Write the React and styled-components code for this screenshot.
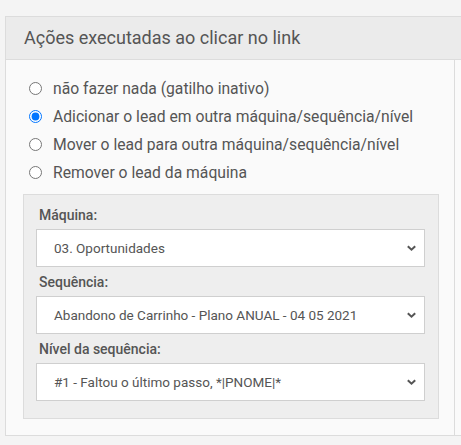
import React from "react";
import styled, { createGlobalStyle } from "styled-components";

const GlobalStyle = createGlobalStyle`
  html, body {
    margin: 0;
    padding: 0;
    background: #f4f4f4;
    overflow: hidden;
  }
  body {
    font-family: Roboto, "Liberation Sans", sans-serif;
    color: #555;
  }
`;

const Page = styled.div`
  padding: 16px 0 0 5px;
  width: 470px;
`;

const Panel = styled.section`
  border: 1px solid #dcdcdc;
  border-right: none;
  background: #fafafa;
`;

const PanelHeader = styled.h2`
  margin: 0;
  height: 42px;
  line-height: 42px;
  padding-left: 18px;
  background: #ebebeb;
  border-bottom: 1px solid #dcdcdc;
  font-size: 18px;
  font-weight: 400;
  color: #555;
`;

const PanelBody = styled.div`
  display: grid;
  grid-template-columns: 449px 1fr;
`;

const Column = styled.div`
  border-right: 1px solid #dcdcdc;
  padding: 14px 15px 16px 17px;
`;

const Options = styled.div`
  display: flex;
  flex-direction: column;
  margin-bottom: 8px;
`;

const Option = styled.label`
  display: flex;
  align-items: center;
  height: 28px;
  font-size: 15.7px;
  color: #555;
  input {
    margin: 0 11px 0 6px;
    width: 13px;
    height: 13px;
  }
`;

const Box = styled.div`
  background: #eeeeee;
  border: 1px solid #dcdcdc;
  padding: 5px 13px 17px 12px;
`;

const Label = styled.div`
  height: 29px;
  line-height: 30px;
  padding-left: 3px;
  font-size: 14px;
  font-weight: 500;
  color: #555;
`;

const SelectWrap = styled.div`
  position: relative;
  height: 38px;
  background: #fff;
  border: 1px solid #cfcfcf;
  box-sizing: border-box;
  display: flex;
  align-items: center;
  padding-left: 17px;
  font-size: 13.5px;
  color: #555;
  svg {
    position: absolute;
    right: 7px;
    top: 50%;
    margin-top: -5px;
  }
`;

const Chevron = () => (
  <svg width="11" height="10" viewBox="0 0 11 10">
    <path d="M1.8 3.2 L5.5 6.7 L9.2 3.2" fill="none" stroke="#555" strokeWidth="2" />
  </svg>
);

const Select = ({ value }) => (
  <SelectWrap>
    {value}
    <Chevron />
  </SelectWrap>
);

const options = [
  "não fazer nada (gatilho inativo)",
  "Adicionar o lead em outra máquina/sequência/nível",
  "Mover o lead para outra máquina/sequência/nível",
  "Remover o lead da máquina",
];

export default function App() {
  return (
    <Page>
      <GlobalStyle />
      <Panel>
        <PanelHeader>Ações executadas ao clicar no link</PanelHeader>
        <PanelBody>
          <Column>
            <Options>
              {options.map((o, i) => (
                <Option key={i}>
                  <input type="radio" name="acao" defaultChecked={i === 1} />
                  {o}
                </Option>
              ))}
            </Options>
            <Box>
              <Label>Máquina:</Label>
              <Select value="03. Oportunidades" />
              <Label>Sequência:</Label>
              <Select value="Abandono de Carrinho - Plano ANUAL - 04 05 2021" />
              <Label>Nível da sequência:</Label>
              <Select value="#1 - Faltou o último passo, *|PNOME|*" />
            </Box>
          </Column>
          <div />
        </PanelBody>
      </Panel>
    </Page>
  );
}
